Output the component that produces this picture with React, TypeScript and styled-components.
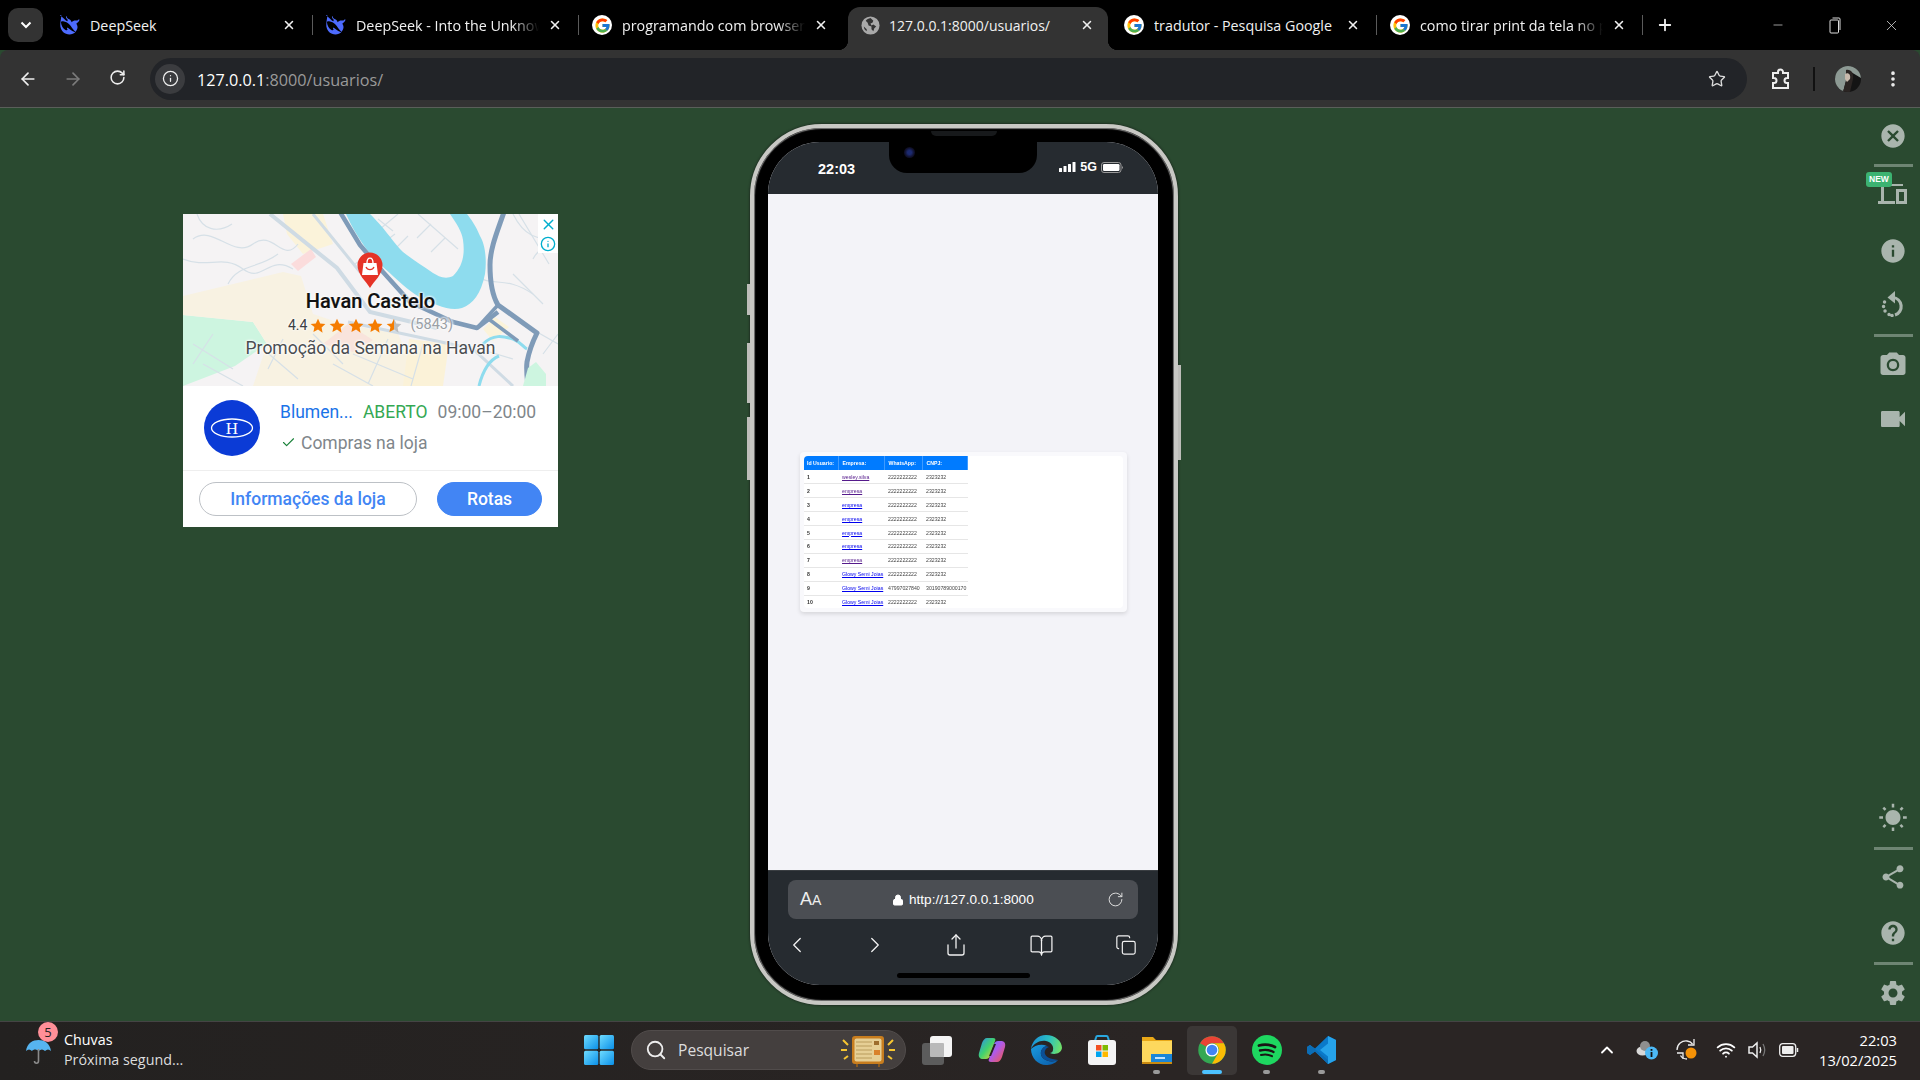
import React from "react";
import styled, { createGlobalStyle } from "styled-components";
import {
  ArrowLeft,
  ArrowRight,
  RotateCw,
  Star,
  Info,
  MoreVertical,
  Search,
  Plus,
  Minus,
  X,
  ChevronUp,
  ChevronLeft,
  ChevronRight,
  Share,
  BookOpen,
  Copy,
  Lock,
  Check,
  Wifi,
} from "lucide-react";
import { FcGoogle } from "react-icons/fc";
import {
  MdCancel,
  MdInfo,
  MdCameraAlt,
  MdVideocam,
  MdHelp,
  MdSettings,
  MdShare,
  MdWbSunny,
} from "react-icons/md";

const GlobalStyle = createGlobalStyle`
  html, body {
    margin: 0;
    padding: 0;
    width: 1920px;
    height: 1080px;
    overflow: hidden;
    background: #2a4a30;
    font-family: "Open Sans", "Liberation Sans", sans-serif;
  }
  * { box-sizing: border-box; }
`;

const Page = styled.div`
  width: 1920px;
  height: 1080px;
  display: flex;
  flex-direction: column;
`;

/* ---------- browser chrome ---------- */

const TabStrip = styled.div`
  height: 50px;
  background: #000;
  display: flex;
  align-items: flex-end;
  color: #fff;
`;

const TabSearch = styled.div`
  width: 35px;
  height: 34px;
  margin: 0 4px 8px 8px;
  border-radius: 10px;
  background: #333;
  display: flex;
  align-items: center;
  justify-content: center;
`;

const Tab = styled.div<{ $active?: boolean; $divider?: boolean }>`
  position: relative;
  width: 266px;
  height: ${({ $active }) => ($active ? "43px" : "50px")};
  margin: 0;
  padding: ${({ $active }) => ($active ? "0 11px 7px 12px" : "0 14px 0 13px")};
  display: flex;
  align-items: center;
  background: ${({ $active }) => ($active ? "#333" : "transparent")};
  border-radius: ${({ $active }) => ($active ? "12px 12px 0 0" : "0")};
  ${({ $active }) =>
    $active
      ? `
    width: 260px;
    margin: 0 3px;
    &::before, &::after {
      content: "";
      position: absolute;
      bottom: 0;
      width: 10px;
      height: 10px;
    }
    &::before { left: -10px; background: radial-gradient(circle at 0 0, #000 10px, #333 10.5px); }
    &::after { right: -10px; background: radial-gradient(circle at 100% 0, #000 10px, #333 10.5px); }
  `
      : ""}
  ${({ $divider }) =>
    $divider
      ? `
    &::after {
      content: "";
      position: absolute;
      right: 0;
      top: 15px;
      width: 1px;
      height: 20px;
      background: #5b5b5b;
    }
  `
      : ""}
`;

const TabTitle = styled.span<{ $fade?: boolean }>`
  flex: 1;
  margin-left: 10px;
  font-size: 14.3px;
  white-space: nowrap;
  overflow: hidden;
  color: #f1f1f1;
  ${({ $fade }) =>
    $fade
      ? `
    -webkit-mask-image: linear-gradient(90deg, #000 85%, transparent 100%);
    mask-image: linear-gradient(90deg, #000 85%, transparent 100%);
  `
      : ""}
`;

const ActiveTabTitle = styled(TabTitle)`
  font-size: 14px;
  margin-left: 9px;
`;

const Favicon = styled.span`
  width: 20px;
  height: 20px;
  flex: none;
  border-radius: 50%;
  display: flex;
  align-items: center;
  justify-content: center;
`;

const GoogleFavicon = styled(Favicon)`
  background: #fff;
`;

const TabClose = styled.span`
  width: 20px;
  margin-left: 6px;
  flex: none;
  display: flex;
  justify-content: center;
`;

const NewTab = styled.div`
  width: 44px;
  height: 50px;
  display: flex;
  align-items: center;
  justify-content: center;
`;

const WindowControls = styled.div`
  margin-left: auto;
  height: 50px;
  display: flex;
  align-items: center;
  color: #ddd;
`;

const WindowButton = styled.span`
  width: 57px;
  display: flex;
  justify-content: center;
`;

const Toolbar = styled.div`
  height: 58px;
  background: #333;
  border-top-left-radius: 8px;
  border-top-right-radius: 8px;
  display: flex;
  align-items: center;
  color: #e8e8e8;
  border-bottom: 1px solid #5a5f5a;
`;

const NavButton = styled.span<{ $dim?: boolean }>`
  width: 45px;
  display: flex;
  justify-content: center;
  color: ${({ $dim }) => ($dim ? "#7c7c7c" : "#eee")};
`;

const NavGroup = styled.div`
  width: 150px;
  padding-left: 5px;
  display: flex;
  flex: none;
`;

const Omnibox = styled.div`
  width: 1597px;
  height: 42px;
  border-radius: 21px;
  background: #222428;
  padding: 0 21px 0 5px;
  display: flex;
  align-items: center;
`;

const SiteInfo = styled.span`
  width: 30px;
  height: 30px;
  border-radius: 50%;
  background: #3b3c3f;
  display: flex;
  align-items: center;
  justify-content: center;
`;

const UrlText = styled.span`
  margin-left: 12px;
  padding-top: 2px;
  font-size: 16.2px;
  color: #fff;
`;

const UrlDim = styled.span`
  color: #9a9a9a;
`;

const ToolbarEnd = styled.div`
  flex: 1;
  display: flex;
  align-items: center;
  padding-left: 23px;
`;

const VDivider = styled.span`
  width: 1.5px;
  height: 24px;
  background: #111;
  margin: 0 20px 0 22px;
`;

const Avatar = styled.span`
  width: 26px;
  height: 26px;
  border-radius: 50%;
  overflow: hidden;
  display: block;
  margin-right: 22px;
`;

/* ---------- page area ---------- */

const Viewport = styled.main`
  flex: 1;
  min-height: 0;
  display: flex;
  align-items: flex-start;
  background: #2a4a30;
`;

const Ad = styled.aside`
  width: 375px;
  height: 313px;
  margin: 106px 0 0 183px;
  background: #fff;
  display: flex;
  flex-direction: column;
  flex: none;
`;

const MapArea = styled.div`
  position: relative;
  height: 172px;
  overflow: hidden;
  background: #f5f3f4;
`;

const MapSvg = styled.svg`
  display: block;
`;

const AdBadges = styled.div`
  position: absolute;
  top: 0;
  right: 0;
  width: 20px;
  height: 39px;
  background: #fff;
  display: flex;
  flex-direction: column;
  align-items: center;
  color: #00aecd;
  padding-top: 2px;
  gap: 3px;
`;

const MapLabel = styled.div`
  position: absolute;
  left: 0;
  right: 0;
  top: 74px;
  display: flex;
  flex-direction: column;
  align-items: center;
  font-family: Roboto, sans-serif;
  text-shadow: 0 0 3px #fff, 0 0 3px #fff, 0 0 2px #fff;
`;

const StoreName = styled.div`
  font-size: 20px;
  font-weight: 500;
  line-height: 26px;
  color: #111;
  -webkit-text-stroke: 0.2px #111;
`;

const Rating = styled.div`
  display: flex;
  align-items: center;
  font-size: 14px;
  line-height: 20px;
  margin-top: 1px;
  color: #3c4043;
  gap: 3px;
`;

const RatingCount = styled.span`
  color: #9aa0a6;
  margin-left: 5px;
  font-size: 14.5px;
`;

const Promo = styled.div`
  font-size: 17.5px;
  line-height: 24px;
  margin-top: 1px;
  color: #4a4d50;
`;

const StoreRow = styled.div`
  height: 85px;
  padding: 0 0 0 21px;
  display: flex;
  align-items: center;
  gap: 20px;
  border-bottom: 1px solid #eee;
  font-family: Roboto, sans-serif;
`;

const Logo = styled.div`
  width: 56px;
  height: 56px;
  border-radius: 50%;
  background: #0b3bd6;
  display: flex;
  align-items: center;
  justify-content: center;
  flex: none;
`;

const StoreLines = styled.div`
  display: flex;
  flex-direction: column;
  gap: 11px;
  margin-top: -2px;
`;

const StoreLine = styled.div`
  display: flex;
  align-items: center;
  font-size: 17.5px;
  line-height: 20px;
  color: #80868b;
`;

const City = styled.span`
  color: #1a73e8;
  margin-right: 10px;
`;

const OpenNow = styled.span`
  color: #34a853;
  margin-right: 10px;
`;

const CheckMark = styled.span`
  color: #188038;
  display: flex;
  margin: 0 5px 0 1px;
`;

const AdActions = styled.div`
  flex: 1;
  display: flex;
  align-items: flex-start;
  padding: 11px 16px 0;
  gap: 20px;
  font-family: Roboto, sans-serif;
`;

const PillButton = styled.div<{ $primary?: boolean }>`
  height: 34px;
  width: ${({ $primary }) => ($primary ? "105px" : "218px")};
  border-radius: 17px;
  border: 1px solid ${({ $primary }) => ($primary ? "#4285f4" : "#bdc1c6")};
  background: ${({ $primary }) => ($primary ? "#4285f4" : "#fff")};
  color: ${({ $primary }) => ($primary ? "#fff" : "#4285f4")};
  font-size: 17.5px;
  font-weight: 500;
  display: flex;
  align-items: center;
  justify-content: center;
`;

/* ---------- phone ---------- */

const Phone = styled.div`
  position: relative;
  width: 428px;
  height: 881px;
  margin: 16px 0 0 192px;
  flex: none;
  padding: 14px 16px 16px 14px;
  border: 4px solid #c8c8c4;
  border-radius: 72px;
  background: #000;
  box-shadow: 0 0 2px 1px rgba(20, 20, 20, 0.45), inset 0 0 1px 1px #777;
`;

const SideButton = styled.span<{ $side: "left" | "right"; $top: number; $h: number }>`
  position: absolute;
  ${({ $side }) => ($side === "left" ? "left: -7px;" : "right: -7px;")}
  top: ${({ $top }) => $top}px;
  width: 3px;
  height: ${({ $h }) => $h}px;
  background: #bdbdb9;
`;

const Speaker = styled.span`
  position: absolute;
  top: 3px;
  left: 177px;
  width: 66px;
  height: 5px;
  border-radius: 0 0 6px 6px;
  background: #17191b;
  z-index: 2;
`;

const Screen = styled.div`
  position: relative;
  height: 100%;
  border-radius: 52px;
  overflow: hidden;
  display: flex;
  flex-direction: column;
  background: #f3f3f8;
`;

const Notch = styled.div`
  position: absolute;
  top: 0;
  left: 121px;
  width: 148px;
  height: 31px;
  background: #000;
  border-radius: 0 0 18px 18px;
`;

const Camera = styled.span`
  position: absolute;
  left: 15px;
  top: 5px;
  width: 11px;
  height: 11px;
  border-radius: 50%;
  background: radial-gradient(circle, #1c2a70 0 25%, #10102a 60%, #08080f 100%);
`;

const StatusBar = styled.div`
  height: 52px;
  background: #262b30;
  padding: 18px 35px 0 50px;
  display: flex;
  align-items: flex-start;
  justify-content: space-between;
  color: #fff;
  font-family: "Liberation Sans", sans-serif;
  font-weight: 700;
  flex: none;
`;

const Clock = styled.span`
  font-size: 14.5px;
  line-height: 18px;
`;

const StatusIcons = styled.span`
  display: flex;
  align-items: center;
  gap: 4px;
  font-size: 12.5px;
  line-height: 14px;
`;

const WebView = styled.div`
  flex: 1;
  display: flex;
  align-items: center;
  justify-content: center;
  background: #f3f3f8;
`;

const DataCard = styled.div`
  width: 327px;
  height: 160px;
  padding: 4px;
  background: #f9f9fc;
  border-radius: 4px;
  box-shadow: 0 2px 4px rgba(0, 0, 0, 0.12);
`;

const DataCardInner = styled.div`
  height: 100%;
  background: #fff;
  border-radius: 4px;
  overflow: hidden;
`;

const Table = styled.table`
  border-collapse: collapse;
  width: 164px;
  table-layout: fixed;
  font-family: "Liberation Sans", sans-serif;
  font-size: 5.2px;
  filter: blur(0.2px);
`;

const Th = styled.th`
  height: 14px;
  padding: 0 0 0 3.5px;
  background: #007bff;
  color: #fff;
  text-align: left;
  font-weight: 700;
  white-space: nowrap;
  border-right: 1px solid #3f9bff;
`;

const Td = styled.td`
  height: 13.9px;
  padding: 0 0 0 3.5px;
  color: #444;
  white-space: nowrap;
  border-bottom: 1px solid #e6e6e6;
`;

const IdCell = styled(Td)`
  font-weight: 700;
  color: #333;
`;

const RowLink = styled.a<{ $visited?: boolean }>`
  color: ${({ $visited }) => ($visited ? "#551a8b" : "#0000ee")};
  text-decoration: underline;
`;

const SafariBar = styled.div`
  height: 115px;
  flex: none;
  background: #262b30;
  border-top: 1px solid #3a3e42;
  display: flex;
  flex-direction: column;
  align-items: center;
  padding-top: 9px;
  color: #f2f2f2;
`;

const AddressField = styled.div`
  width: 350px;
  height: 39px;
  border-radius: 8px;
  background: #4b4e53;
  display: flex;
  align-items: center;
  padding: 0 14px 0 12px;
  font-family: "Liberation Sans", sans-serif;
`;

const ReaderMark = styled.span`
  font-size: 18px;
  width: 92px;
  color: #eee;
`;

const ReaderSmall = styled.span`
  font-size: 14px;
`;

const AddressText = styled.span`
  font-size: 13.6px;
  display: flex;
  align-items: center;
  gap: 5px;
  color: #fff;
`;

const EndSlot = styled.span`
  margin-left: auto;
  display: flex;
  color: #ddd;
`;

const SafariIcons = styled.div`
  width: 350px;
  height: 26px;
  margin-top: 13px;
  display: grid;
  grid-template-columns: 18px 138px 24px 146px 24px;
  justify-items: center;
  align-items: center;
`;

const SafariIconCell = styled.span`
  display: flex;
  justify-content: center;
  width: 26px;
`;

const HomeBar = styled.span`
  width: 133px;
  height: 5px;
  border-radius: 3px;
  background: #000;
  margin-top: 15px;
`;

/* ---------- right tool column ---------- */

const SideTools = styled.div`
  margin-left: auto;
  width: 54px;
  height: 100%;
  display: flex;
  flex-direction: column;
  justify-content: space-between;
  color: #a9b5ad;
  flex: none;
`;

const ToolGroup = styled.div`
  display: flex;
  flex-direction: column;
  align-items: center;
`;

const ToolSlot = styled.span<{ $h: number }>`
  position: relative;
  height: ${({ $h }) => $h}px;
  display: flex;
  align-items: center;
  justify-content: center;
`;

const ToolDivider = styled.span<{ $top?: number; $bottom?: number }>`
  width: 39px;
  height: 3px;
  background: #6e8573;
  margin: ${({ $top }) => $top ?? 0}px 0 ${({ $bottom }) => $bottom ?? 0}px;
`;

const NewBadge = styled.span`
  position: absolute;
  top: 5px;
  left: -12px;
  padding: 0 3px;
  height: 15px;
  background: #3cb371;
  border-radius: 3px;
  color: #fff;
  font-family: "Liberation Sans", sans-serif;
  font-size: 8.5px;
  font-weight: 700;
  line-height: 15px;
`;

/* ---------- taskbar ---------- */

const Taskbar = styled.footer`
  height: 59px;
  flex: none;
  display: flex;
  align-items: center;
  padding-bottom: 2px;
  background: linear-gradient(90deg, #232120, #2a2524 60%, #2a2524);
  border-top: 1px solid #444;
  color: #fff;
`;

const Weather = styled.div`
  width: 571px;
  flex: none;
  padding-left: 25px;
  display: flex;
  align-items: center;
  position: relative;
`;

const WeatherBadge = styled.span`
  position: absolute;
  left: 38px;
  top: -8px;
  width: 20px;
  height: 20px;
  border-radius: 50%;
  background: #ff8f98;
  color: #222;
  font-size: 13px;
  line-height: 20px;
  text-align: center;
`;

const WeatherText = styled.div`
  margin-left: 12px;
  font-size: 14.3px;
  line-height: 20px;
`;

const WeatherSub = styled.div`
  color: #ddd;
`;

const TaskIcon = styled.span<{ $active?: boolean; $running?: boolean }>`
  position: relative;
  width: 55px;
  height: 49px;
  flex: none;
  display: flex;
  align-items: center;
  justify-content: center;
  ${({ $active }) =>
    $active
      ? `
    width: 50px;
    margin: 0 2.5px;
    border-radius: 5px;
    background: #3b3736;
    &::after {
      content: "";
      position: absolute;
      left: 15px;
      bottom: 1px;
      width: 20px;
      height: 4px;
      border-radius: 2px;
      background: #4cc2ff;
    }
  `
      : ""}
  ${({ $running }) =>
    $running
      ? `
    &::after {
      content: "";
      position: absolute;
      left: 24px;
      bottom: 1px;
      width: 7px;
      height: 4px;
      border-radius: 2px;
      background: #9a9a9a;
    }
  `
      : ""}
`;

const SearchPill = styled.div`
  width: 275px;
  height: 40px;
  margin: 0 3px 0 5px;
  border-radius: 20px;
  background: #443f3e;
  border: 1px solid #514c4b;
  display: flex;
  align-items: center;
  padding: 0 9px 0 13px;
  flex: none;
`;

const SearchText = styled.span`
  margin-left: 11px;
  font-size: 15.6px;
  color: #ddd;
`;

const SearchArt = styled.span`
  margin-left: auto;
  display: flex;
`;

const Tray = styled.div`
  margin-left: auto;
  padding-right: 23px;
  display: flex;
  align-items: center;
`;

const TrayIcon = styled.span<{ $w: number }>`
  width: ${({ $w }) => $w}px;
  display: flex;
  justify-content: center;
`;

const DateTime = styled.div`
  margin-left: 12px;
  text-align: right;
  font-size: 14.7px;
  line-height: 20px;
`;

/* ---------- drawings ---------- */

const DeepSeekIcon = () => (
  <svg width="20" height="20" viewBox="0 0 24 24">
    <path
      fill="#4d6bfe"
      d="M23 5c-.3-.1-.4.1-.6.3-1 1.100-2.200 1.500-3.500 1.400-2-.1-3.600.5-5 2-.3-1.800-1.300-2.900-2.900-3.600-.8-.4-1.700-.7-2.300-1.500-.4-.5-.5-1.200-.7-1.800-.1-.2-.2-.4-.4-.3-.3 0-.4.200-.4.400 0 1.600.6 2.900 2 3.800.200.100.200.200.1.400-.1.400-.2.700-.4 1.100-.1.200-.2.300-.4.200-1-.4-1.900-1.100-2.700-1.900-1.300-1.300-2.500-2.700-4-3.800-.4-.3-.7-.5-1.100-.7-1.500-1.500.200-2.700.600-2.800-.1 0 .3 3 .3 3C.7 8 0 11 .5 14c.6 4 3 7 6.700 8.600 4 1.500 8.800.8 11.500-2.500 1.200-1.400 2-3 2.300-5 .1-1.500-.3-3.500-1.500-4.700.8-.5 2.500-1.600 3.500-3.400.2-.5.400-1.700 0-2zM13 18c-2.500-2-3.700-2.600-4.200-2.600-.5 0-.4.600-.3 1 .1.400.3.700.5 1 .1.200.2.500-.2.700-.8.500-2.200-.2-2.300-.2-1.600-1-3-2.200-3.900-4-.9-1.700-1.400-3.500-1.500-5.400 0-.5.100-.7.600-.8.700-.1 1.400-.2 2.100-.1 2.900.4 5.400 1.700 7.500 3.800 1.200 1.200 2.100 2.600 3 4 1 1.500 2.100 2.900 3.500 4 .5.400.900.700 1.300.900-1.200.1-3 .2-6.100-2.300z"
    />
  </svg>
);

const GlobeIcon = () => (
  <svg width="19" height="19" viewBox="0 0 20 20">
    <circle cx="10" cy="10" r="9.500" fill="#a9a9a9" />
    <path
      fill="#333"
      d="M10 2c-2 .5-4 1.500-5 3l2 2 1 3 3 1v3l2 2 1-3 2-2-3-2-2 1-1-2 2-1 1-2-3-3zM4 12l-1-1c0 2 1 4 3 5v-2z"
    />
  </svg>
);

const GoogleG = () => (
  <GoogleFavicon>
    <FcGoogle size={17} />
  </GoogleFavicon>
);

const CloseGlyph = () => <X size={14} strokeWidth={2.6} color="#f0f0f0" />;

const RestoreGlyph = () => (
  <svg width="12" height="17" viewBox="0 0 12 17" fill="none" stroke="#ddd" strokeWidth="1">
    <rect x="1" y="3" width="8.500" height="13" rx="1" />
    <path d="M3.500 1H10a1 1 0 0 1 1 1v11" />
  </svg>
);

const ExtensionGlyph = () => (
  <svg width="21" height="23" viewBox="0 0 21 23" fill="none" stroke="#eee" strokeWidth="2">
    <path d="M8 5a2.500 2.500 0 0 1 5 0v1h5v5h-1a2.500 2.500 0 0 0 0 5h1v5H3v-5h1a2.500 2.500 0 0 0 0-5H3V6h5z" />
  </svg>
);

const AvatarArt = () => (
  <svg width="26" height="26" viewBox="0 0 26 26">
    <rect width="26" height="26" fill="#141414" />
    <path d="M0 0h26v12L16 6 12 12 8 26H0z" fill="#8d9a94" />
    <path d="M11 4c5-1 8 3 7 9l-3 13H8l3-12z" fill="#2b2523" />
    <path d="M10 8c3-2 6 0 5 5l-3 3-2-3z" fill="#c8b9ac" />
  </svg>
);

const MapDrawing = () => (
  <MapSvg width="375" height="172" viewBox="0 0 375 172" fill="none">
    <path d="M0 101L70 108 84 130 52 152 0 172z" fill="#cdf5e0" />
    <path d="M0 82L100 58 118 62 130 100 160 110 215 120 240 172H70L84 130 70 108 0 101z" fill="#f8f2e2" />
    <path d="M226 125l40 5-6 42h-40z" fill="#fbf2d8" />
    <path d="M100 0h40l10 30-30 10-16-20z" fill="#fbf3da" />
    <path d="M165 110l-25 20 30 8 20-12z" fill="#f9e4dc" />
    <path d="M108 50l20-15 5 8-18 14z" fill="#fbdcdc" />
    <path d="M300 115l12-12 14 10-16 14z" fill="#fbf3da" />
    <g stroke="#d6e0e7" strokeWidth="1.200">
      <path d="M10 25C30 10 50 45 70 30s30 20 45 0M0 45c25 10 40-5 60 10s25-15 50 0M45 70c10-20 30-15 50-30M14 0c5 15 20 20 35 10M290 60c20 15 30 0 60 20M350 45c5-10 15-15 25-10M330 0c10 20 25 30 45 20" />
      <path d="M172 50l40-30M195 5l15 12M215 0l-30 25M235 0l40 35M225 22l-12 12M248 10l-14 14M262 24l-14 14M336 0l30 50M330 60l30 30" />
      <path d="M10 130l40 25M30 120l-20 30M20 150l40 22M80 135l35 30M100 125l-15 30M170 140l60 25M205 125l-20 45M240 130l-12 42M280 130l50 15M340 110l35 20M360 140l15-20M130 120l30 30M150 150l40 22" />
    </g>
    <g stroke="#cfdbe4" strokeWidth="4">
      <path d="M87 0l67 54 33 44 67 16" />
      <path d="M130 0l47 58M165 108l70 15 55 12 40 37" strokeWidth="3" />
    </g>
    <path
      d="M163 0C172 20 185 40 200 53 208 60 214 66 220 71 230 80 242 87 254 91 264 95 272 96 279 94 290 90 298 80 302 60 304 45 302 30 297 22 293 12 288 5 284 0H267C274 10 279 18 280 26 282 40 280 52 270 62 262 66 255 62 250 59 240 52 230 46 220 38 212 30 205 20 200 14 195 8 190 3 187 0Z"
      fill="#8edcee"
    />
    <path d="M300 130c10-10 20-8 30-5 8 3 10 8 14 10M296 172c4-16 10-26 20-30" stroke="#8edcee" strokeWidth="3" />
    <g stroke="#7f9bb8" strokeLinejoin="round">
      <path d="M157-2l20 33 23 27 27 30 43 20 24 6 21-16" strokeWidth="4.500" />
      <path d="M321-2c-6 18-14 36-14 53 0 16 2 30 8 40l39 28c-5 10-8 18-10 29-1 8 0 15 1 24" strokeWidth="5" />
      <path d="M303 103l32 24M315 91l-21 23" strokeWidth="3.500" />
    </g>
    <path d="M340 172l5-18 8-6 10 12v12z" fill="#cdf5e0" />
    <path d="M187 74c-4-7-12.500-13-12.500-23a12.500 12.500 0 0 1 25 0c0 10-8.500 16-12.500 23z" fill="#e53327" />
    <path d="M180.500 49h13l1.500 12h-16z" fill="#fff" />
    <path d="M184 49c0-6.500 6-6.500 6 0" stroke="#fff" strokeWidth="1.400" />
    <path d="M183 53c1.500 3.500 6.500 3.500 8 0" stroke="#e53327" strokeWidth="1.300" />
  </MapSvg>
);

const RatingStar = ({ half }: { half?: boolean }) => (
  <svg width="16" height="15" viewBox="0 0 24 23">
    <defs>
      <linearGradient id="halfStar">
        <stop offset="50%" stopColor="#f57c00" />
        <stop offset="50%" stopColor="#bdbdbd" />
      </linearGradient>
    </defs>
    <path
      d="M12 1l3.400 7.300 7.900 1-5.800 5.400 1.500 7.800L12 17.700l-7 3.800 1.500-7.800L.7 9.300l7.900-1z"
      fill={half ? "url(#halfStar)" : "#f57c00"}
    />
  </svg>
);

const HavanLogo = () => (
  <svg width="44" height="24" viewBox="0 0 44 24" fill="none">
    <ellipse cx="22" cy="12" rx="20.500" ry="9" stroke="#fff" strokeWidth="1.300" />
    <text x="22" y="18" textAnchor="middle" fontFamily="Liberation Serif" fontSize="17" fill="#fff">
      H
    </text>
  </svg>
);

const SignalBars = () => (
  <svg width="17" height="10" viewBox="0 0 17 10" fill="#fff">
    <rect x="0" y="6" width="3" height="4" rx=".5" />
    <rect x="4.500" y="4" width="3" height="6" rx=".5" />
    <rect x="9" y="2" width="3" height="8" rx=".5" />
    <rect x="13.500" y="0" width="3" height="10" rx=".5" />
  </svg>
);

const BatteryGlyph = () => (
  <svg width="22" height="11" viewBox="0 0 22 11">
    <rect x=".5" y=".5" width="19.500" height="10" rx="2.500" fill="none" stroke="#9a9a9a" />
    <rect x="2" y="2" width="16.500" height="7" rx="1.200" fill="#fff" />
    <path d="M21 4v3c.6-.3 1-.9 1-1.500S21.600 4.300 21 4z" fill="#9a9a9a" />
  </svg>
);

const DevicesGlyph = () => (
  <svg width="30" height="22" viewBox="0 0 30 22" fill="#a9b5ad">
    <rect x="7" y="0" width="18" height="2" />
    <rect x="3" y="2" width="3" height="15" />
    <rect x="0" y="17" width="17" height="3" />
    <path d="M18 5h11v15H18zM21 8v9h5V8z" fillRule="evenodd" />
  </svg>
);

const RotateGlyph = () => (
  <svg width="24" height="26" viewBox="0 0 24 26" fill="none" stroke="#a9b5ad" strokeWidth="3.200">
    <path d="M12 6.500a9 9 0 0 1 2 17.500" />
    <path d="M2.500 15.500h.1M3.500 11h.1M4 20h.1M8 23.500h.1M11 24.500h.1" strokeWidth="3.400" strokeLinecap="round" />
    <path d="M14 0L6.500 6.500l7.500 6z" fill="#a9b5ad" stroke="none" />
  </svg>
);

const UmbrellaIcon = () => (
  <svg width="27" height="30" viewBox="0 0 27 30" fill="none">
    <path d="M1 16C2 8 8 5 13.500 5S25 8 26 16c-2-2-4-2-6 0-2-2-4-2-6.500 0-2-2-5-2-6.500 0-2-2-4-2-6 0z" fill="#56b4f0" />
    <path d="M13.500 14v12c0 3-4 3-4 0" stroke="#8a8a8a" strokeWidth="1.600" />
  </svg>
);

const WindowsLogo = () => (
  <svg width="30" height="30" viewBox="0 0 30 30">
    <defs>
      <linearGradient id="winTile" x1="0" y1="0" x2="1" y2="1">
        <stop offset="0" stopColor="#6fdcff" />
        <stop offset="1" stopColor="#0a8fe8" />
      </linearGradient>
    </defs>
    <rect x="0" y="0" width="14.300" height="14.300" rx="1.500" fill="url(#winTile)" />
    <rect x="15.700" y="0" width="14.300" height="14.300" rx="1.500" fill="url(#winTile)" />
    <rect x="0" y="15.700" width="14.300" height="14.300" rx="1.500" fill="url(#winTile)" />
    <rect x="15.700" y="15.700" width="14.300" height="14.300" rx="1.500" fill="url(#winTile)" />
  </svg>
);

const RadioArt = () => (
  <svg width="56" height="36" viewBox="0 0 56 36">
    <path d="M3 8l5 5M53 8l-5 5M1 18h6M55 18h-6M4 27l4-3M52 27l-4-3" stroke="#f7c531" strokeWidth="2" />
    <rect x="12" y="4" width="32" height="28" rx="3" fill="#c87d1e" />
    <rect x="14.500" y="6.500" width="27" height="23" rx="2" fill="#e6cf95" />
    <path d="M16 10h16M16 14h16M16 18h16M16 22h16M16 26h16" stroke="#b99c5c" />
    <rect x="34" y="9" width="5" height="4" fill="#9d6d2c" />
    <rect x="34" y="18" width="6" height="5" fill="#d9822b" />
    <path d="M17 32v3M39 32v3" stroke="#8a5a1e" strokeWidth="2" />
  </svg>
);

const TaskViewIcon = () => (
  <svg width="30" height="29" viewBox="0 0 30 29">
    <rect x="0" y="7" width="22" height="22" rx="3" fill="#5c5c5c" />
    <rect x="8" y="0" width="22" height="21" rx="3" fill="#f4f4f4" />
    <rect x="8" y="7" width="14" height="14" rx="1" fill="#b9b9b9" />
  </svg>
);

const CopilotIcon = () => (
  <svg width="28" height="26" viewBox="0 0 28 26" fill="none">
    <defs>
      <linearGradient id="copA" x1="0" y1="0" x2="1" y2="1">
        <stop offset="0" stopColor="#2b8cf5" />
        <stop offset=".5" stopColor="#41d26e" />
        <stop offset="1" stopColor="#f6d32d" />
      </linearGradient>
      <linearGradient id="copB" x1="0" y1="0" x2="1" y2="1">
        <stop offset="0" stopColor="#5a7cf5" />
        <stop offset=".45" stopColor="#b05ae8" />
        <stop offset="1" stopColor="#f9583a" />
      </linearGradient>
    </defs>
    <path d="M9 1h6c2 0 3 1 2 3l-5 15c-1 2-2 3-4 3H5c-3 0-5-2-4-6l3-10C5 3 7 1 9 1z" fill="url(#copA)" />
    <path d="M19 25h-6c-2 0-3-1-2-3l5-15c1-2 2-3 4-3h3c3 0 5 2 4 6l-3 10c-1 3-3 5-5 5z" fill="url(#copB)" />
    <path d="M16 7l-5 12h2l5-12z" fill="#2a2020" />
  </svg>
);

const EdgeIcon = () => (
  <svg width="31" height="30" viewBox="0 0 31 30">
    <defs>
      <linearGradient id="edgeA" x1="0" y1=".3" x2="1" y2=".5">
        <stop offset="0" stopColor="#1b8fd8" />
        <stop offset=".55" stopColor="#2bbfc0" />
        <stop offset="1" stopColor="#6fe06a" />
      </linearGradient>
      <linearGradient id="edgeB" x1="0" y1="0" x2="1" y2="1">
        <stop offset="0" stopColor="#1a9ce0" />
        <stop offset="1" stopColor="#0a5aa8" />
      </linearGradient>
    </defs>
    <path d="M15 0C7 0 1 6 0 14c3-6 9-9 15-8 5 1 8 5 7 9 0 2-2 3-3 3 4 2 11 1 12-5C31 6 24 0 15 0z" fill="url(#edgeA)" />
    <path d="M0 14c0 9 7 16 15 16 4 0 9-1 12-5-4 2-10 2-14-1-4-3-4-8-1-11 1-1 2-2 4-2-6-3-13 0-16 3z" fill="url(#edgeB)" />
    <path d="M13 24c-4-3-4-8-1-11 2-2 4-2 6-1-3 1-5 4-4 7 1 3 5 5 13 6-4 2-10 2-14-1z" fill="#0b4f96" />
  </svg>
);

const StoreIcon = () => (
  <svg width="30" height="30" viewBox="0 0 30 30" fill="none">
    <path d="M8 6l1-3.500c.2-.8.7-1.500 1.500-1.500h9c.8 0 1.300.7 1.500 1.500L22 6" stroke="#29a8e0" strokeWidth="2" />
    <rect x="1" y="5" width="28" height="25" rx="3" fill="#f4f4f4" />
    <rect x="9" y="10" width="5.500" height="5.500" fill="#f25022" />
    <rect x="15.500" y="10" width="5.500" height="5.500" fill="#7fba00" />
    <rect x="9" y="16.500" width="5.500" height="5.500" fill="#00a4ef" />
    <rect x="15.500" y="16.500" width="5.500" height="5.500" fill="#ffb900" />
  </svg>
);

const ExplorerIcon = () => (
  <svg width="32" height="30" viewBox="0 0 32 30">
    <path d="M1 2h11l3 3h16v24H1z" fill="#e9a817" />
    <rect x="1" y="6" width="30" height="23" fill="#fdd85d" />
    <rect x="1" y="27" width="30" height="2" fill="#c98a10" />
    <rect x="10" y="19" width="21" height="8" fill="#1a86d9" />
    <rect x="14" y="22" width="10" height="2" fill="#bfe3ff" />
  </svg>
);

const ChromeIcon = () => (
  <svg width="30" height="30" viewBox="0 0 48 48">
    <circle cx="24" cy="24" r="22" fill="#34a853" />
    <path d="M5 13a22 22 0 0 1 38.050 0H24a11 11 0 0 0-9.530 5.500z" fill="#ea4335" />
    <path d="M43.050 13A22 22 0 0 1 24 46l9.530-16.500A11 11 0 0 0 24 13z" fill="#fbbc05" />
    <circle cx="24" cy="24" r="10.500" fill="#fff" />
    <circle cx="24" cy="24" r="8.500" fill="#4285f4" />
  </svg>
);

const SpotifyIcon = () => (
  <svg width="30" height="30" viewBox="0 0 30 30" fill="none">
    <circle cx="15" cy="15" r="15" fill="#1ed760" />
    <g stroke="#191414" strokeLinecap="round">
      <path d="M7 10.500c5-1.500 11-1 16 1.500" strokeWidth="2.800" />
      <path d="M8 15.500c5-1.200 10-.5 13.500 1.500" strokeWidth="2.400" />
      <path d="M9 20c4-1 8-.5 11 1.200" strokeWidth="2" />
    </g>
  </svg>
);

const VsCodeIcon = () => (
  <svg width="30" height="30" viewBox="0 0 30 30">
    <path d="M21 1l8 4v20l-8 4-13-12.500L3 20l-3-2v-6l3-2 5 3.500z" fill="#0a79c9" />
    <path d="M21 1l8 4v20l-8 4zM21 8.500L13 15l8 6.500z" fill="#26a3ea" fillRule="evenodd" />
    <path d="M0 12l3-2 18 15v4l-13-12.500L3 20l-3-2z" fill="#0c6db5" />
  </svg>
);

const CloudInfoIcon = () => (
  <svg width="22" height="20" viewBox="0 0 22 20">
    <ellipse cx="6.500" cy="11" rx="6" ry="4.500" fill="#d8d8d8" />
    <circle cx="9" cy="6" r="5" fill="#8f8f8f" />
    <circle cx="15.500" cy="13" r="6.500" fill="#4cb8f5" />
    <rect x="14.600" y="12" width="1.800" height="5" fill="#111" />
    <rect x="14.600" y="9" width="1.800" height="1.800" fill="#111" />
  </svg>
);

const SyncIcon = () => (
  <svg width="24" height="24" viewBox="0 0 24 24" fill="none">
    <path d="M2 12C2 6 7 2.500 12 3c2 .2 4 1 5.500 3" stroke="#eee" strokeWidth="1.300" />
    <path d="M19 1v6h-6" stroke="#eee" strokeWidth="1.300" />
    <path d="M12 21c-2.500 0-5-1-6.500-3.500" stroke="#eee" strokeWidth="1.300" />
    <path d="M2 15h6v6" stroke="#eee" strokeWidth="1.300" />
    <circle cx="16" cy="15" r="5.500" fill="#f59207" />
  </svg>
);

const VolumeGlyph = () => (
  <svg width="20" height="20" viewBox="0 0 20 20" fill="none">
    <path d="M1 7h3.500L9 3v14l-4.500-4H1z" stroke="#eee" strokeWidth="1.500" />
    <path d="M12 7c1 2 1 4 0 6" stroke="#eee" strokeWidth="1.300" />
    <path d="M15 4c2 3.500 2 8.500 0 12" stroke="#777" strokeWidth="1.300" />
  </svg>
);

const BatteryTray = () => (
  <svg width="20" height="14" viewBox="0 0 20 14" fill="none">
    <rect x=".7" y=".7" width="16" height="12.600" rx="3" stroke="#eee" strokeWidth="1.300" />
    <rect x="3" y="3" width="11.500" height="8" rx="1" fill="#eee" />
    <path d="M18.500 5v4" stroke="#eee" strokeWidth="1.500" />
  </svg>
);

type Row = { id: number; name: string; visited?: boolean; phone: string; cnpj: string };

const rows: Row[] = [
  { id: 1, name: "wesley.silva", visited: true, phone: "2222222222", cnpj: "2323232" },
  { id: 2, name: "empresa", visited: true, phone: "2222222222", cnpj: "2323232" },
  { id: 3, name: "empresa", phone: "2222222222", cnpj: "2323232" },
  { id: 4, name: "empresa", phone: "2222222222", cnpj: "2323232" },
  { id: 5, name: "empresa", phone: "2222222222", cnpj: "2323232" },
  { id: 6, name: "empresa", phone: "2222222222", cnpj: "2323232" },
  { id: 7, name: "empresa", visited: true, phone: "2222222222", cnpj: "2323232" },
  { id: 8, name: "Glowy Semi Joias", phone: "2222222222", cnpj: "2323232" },
  { id: 9, name: "Glowy Semi Joias", phone: "47997027840", cnpj: "30190789000170" },
  { id: 10, name: "Glowy Semi Joias", phone: "2222222222", cnpj: "2323232" },
];

const App = () => (
  <Page>
    <GlobalStyle />
    <TabStrip>
      <TabSearch>
        <svg width="12" height="8" viewBox="0 0 12 8" fill="none" stroke="#fff" strokeWidth="2">
          <path d="M1.500 1.500L6 6l4.500-4.500" />
        </svg>
      </TabSearch>
      <Tab $divider>
        <Favicon>
          <DeepSeekIcon />
        </Favicon>
        <TabTitle>DeepSeek</TabTitle>
        <TabClose>
          <CloseGlyph />
        </TabClose>
      </Tab>
      <Tab $divider>
        <Favicon>
          <DeepSeekIcon />
        </Favicon>
        <TabTitle $fade>DeepSeek - Into the Unknown</TabTitle>
        <TabClose>
          <CloseGlyph />
        </TabClose>
      </Tab>
      <Tab>
        <GoogleG />
        <TabTitle $fade>programando com browser</TabTitle>
        <TabClose>
          <CloseGlyph />
        </TabClose>
      </Tab>
      <Tab $active>
        <Favicon>
          <GlobeIcon />
        </Favicon>
        <ActiveTabTitle>127.0.0.1:8000/usuarios/</ActiveTabTitle>
        <TabClose>
          <CloseGlyph />
        </TabClose>
      </Tab>
      <Tab $divider>
        <GoogleG />
        <TabTitle>tradutor - Pesquisa Google</TabTitle>
        <TabClose>
          <CloseGlyph />
        </TabClose>
      </Tab>
      <Tab $divider>
        <GoogleG />
        <TabTitle $fade>como tirar print da tela no pc</TabTitle>
        <TabClose>
          <CloseGlyph />
        </TabClose>
      </Tab>
      <NewTab>
        <Plus size={18} strokeWidth={2.4} color="#f0f0f0" />
      </NewTab>
      <WindowControls>
        <WindowButton>
          <Minus size={14} strokeWidth={1.2} />
        </WindowButton>
        <WindowButton>
          <RestoreGlyph />
        </WindowButton>
        <WindowButton>
          <X size={17} strokeWidth={1.1} />
        </WindowButton>
      </WindowControls>
    </TabStrip>

    <Toolbar>
      <NavGroup>
        <NavButton>
          <ArrowLeft size={20} strokeWidth={2} />
        </NavButton>
        <NavButton $dim>
          <ArrowRight size={20} strokeWidth={2} />
        </NavButton>
        <NavButton>
          <RotateCw size={17} strokeWidth={2.2} />
        </NavButton>
      </NavGroup>
      <Omnibox>
        <SiteInfo>
          <Info size={17} strokeWidth={1.8} color="#eee" />
        </SiteInfo>
        <UrlText>
          127.0.0.1<UrlDim>:8000/usuarios/</UrlDim>
        </UrlText>
        <EndSlot>
          <Star size={18} strokeWidth={1.8} color="#ddd" />
        </EndSlot>
      </Omnibox>
      <ToolbarEnd>
        <ExtensionGlyph />
        <VDivider />
        <Avatar>
          <AvatarArt />
        </Avatar>
        <MoreVertical size={20} strokeWidth={2.4} color="#eee" />
      </ToolbarEnd>
    </Toolbar>

    <Viewport>
      <Ad>
        <MapArea>
          <MapDrawing />
          <AdBadges>
            <X size={17} strokeWidth={2} />
            <Info size={16} strokeWidth={2} />
          </AdBadges>
          <MapLabel>
            <StoreName>Havan Castelo</StoreName>
            <Rating>
              4.4
              <RatingStar />
              <RatingStar />
              <RatingStar />
              <RatingStar />
              <RatingStar half />
              <RatingCount>(5843)</RatingCount>
            </Rating>
            <Promo>Promoção da Semana na Havan</Promo>
          </MapLabel>
        </MapArea>
        <StoreRow>
          <Logo>
            <HavanLogo />
          </Logo>
          <StoreLines>
            <StoreLine>
              <City>Blumen...</City>
              <OpenNow>ABERTO</OpenNow>
              09:00–20:00
            </StoreLine>
            <StoreLine>
              <CheckMark>
                <Check size={15} strokeWidth={1.8} />
              </CheckMark>
              Compras na loja
            </StoreLine>
          </StoreLines>
        </StoreRow>
        <AdActions>
          <PillButton>Informações da loja</PillButton>
          <PillButton $primary>Rotas</PillButton>
        </AdActions>
      </Ad>

      <Phone>
        <SideButton $side="left" $top={156} $h={31} />
        <SideButton $side="left" $top={215} $h={60} />
        <SideButton $side="left" $top={289} $h={63} />
        <SideButton $side="right" $top={237} $h={95} />
        <Speaker />
        <Screen>
          <StatusBar>
            <Clock>22:03</Clock>
            <StatusIcons>
              <SignalBars />
              5G
              <BatteryGlyph />
            </StatusIcons>
          </StatusBar>
          <Notch>
            <Camera />
          </Notch>
          <WebView>
            <DataCard>
              <DataCardInner>
                <Table>
                  <colgroup>
                    <col width="35" />
                    <col width="46" />
                    <col width="38" />
                    <col width="45" />
                  </colgroup>
                  <thead>
                    <tr>
                      <Th>Id Usuario:</Th>
                      <Th>Empresa:</Th>
                      <Th>WhatsApp:</Th>
                      <Th>CNPJ:</Th>
                    </tr>
                  </thead>
                  <tbody>
                    {rows.map((row) => (
                      <tr key={row.id}>
                        <IdCell>{row.id}</IdCell>
                        <Td>
                          <RowLink $visited={row.visited}>{row.name}</RowLink>
                        </Td>
                        <Td>{row.phone}</Td>
                        <Td>{row.cnpj}</Td>
                      </tr>
                    ))}
                  </tbody>
                </Table>
              </DataCardInner>
            </DataCard>
          </WebView>
          <SafariBar>
            <AddressField>
              <ReaderMark>
                A<ReaderSmall>A</ReaderSmall>
              </ReaderMark>
              <AddressText>
                <Lock size={12} fill="#fff" strokeWidth={2} />
                http://127.0.0.1:8000
              </AddressText>
              <EndSlot>
                <RotateCw size={17} strokeWidth={1.4} />
              </EndSlot>
            </AddressField>
            <SafariIcons>
              <SafariIconCell>
                <ChevronLeft size={26} strokeWidth={1.2} />
              </SafariIconCell>
              <SafariIconCell>
                <ChevronRight size={26} strokeWidth={1.2} />
              </SafariIconCell>
              <SafariIconCell>
                <Share size={24} strokeWidth={1.3} />
              </SafariIconCell>
              <SafariIconCell>
                <BookOpen size={25} strokeWidth={1.2} />
              </SafariIconCell>
              <SafariIconCell>
                <Copy size={22} strokeWidth={1.3} />
              </SafariIconCell>
            </SafariIcons>
            <HomeBar />
          </SafariBar>
        </Screen>
      </Phone>

      <SideTools>
        <ToolGroup>
          <ToolSlot $h={56}>
            <MdCancel size={28} />
          </ToolSlot>
          <ToolDivider />
          <ToolSlot $h={56}>
            <DevicesGlyph />
            <NewBadge>NEW</NewBadge>
          </ToolSlot>
          <ToolSlot $h={56}>
            <MdInfo size={28} />
          </ToolSlot>
          <ToolSlot $h={50}>
            <RotateGlyph />
          </ToolSlot>
          <ToolDivider $top={5} />
          <ToolSlot $h={56}>
            <MdCameraAlt size={30} />
          </ToolSlot>
          <ToolSlot $h={52}>
            <MdVideocam size={32} />
          </ToolSlot>
        </ToolGroup>
        <ToolGroup>
          <ToolSlot $h={58}>
            <MdWbSunny size={30} />
          </ToolSlot>
          <ToolDivider />
          <ToolSlot $h={54}>
            <MdShare size={28} />
          </ToolSlot>
          <ToolSlot $h={58}>
            <MdHelp size={28} />
          </ToolSlot>
          <ToolDivider />
          <ToolSlot $h={56}>
            <MdSettings size={30} />
          </ToolSlot>
        </ToolGroup>
      </SideTools>
    </Viewport>

    <Taskbar>
      <Weather>
        <UmbrellaIcon />
        <WeatherBadge>5</WeatherBadge>
        <WeatherText>
          Chuvas
          <WeatherSub>Próxima segund...</WeatherSub>
        </WeatherText>
      </Weather>
      <TaskIcon>
        <WindowsLogo />
      </TaskIcon>
      <SearchPill>
        <Search size={22} strokeWidth={2} color="#eee" />
        <SearchText>Pesquisar</SearchText>
        <SearchArt>
          <RadioArt />
        </SearchArt>
      </SearchPill>
      <TaskIcon>
        <TaskViewIcon />
      </TaskIcon>
      <TaskIcon>
        <CopilotIcon />
      </TaskIcon>
      <TaskIcon>
        <EdgeIcon />
      </TaskIcon>
      <TaskIcon>
        <StoreIcon />
      </TaskIcon>
      <TaskIcon $running>
        <ExplorerIcon />
      </TaskIcon>
      <TaskIcon $active>
        <ChromeIcon />
      </TaskIcon>
      <TaskIcon $running>
        <SpotifyIcon />
      </TaskIcon>
      <TaskIcon $running>
        <VsCodeIcon />
      </TaskIcon>
      <Tray>
        <TrayIcon $w={40}>
          <ChevronUp size={20} strokeWidth={2.2} />
        </TrayIcon>
        <TrayIcon $w={40}>
          <CloudInfoIcon />
        </TrayIcon>
        <TrayIcon $w={40}>
          <SyncIcon />
        </TrayIcon>
        <TrayIcon $w={38}>
          <Wifi size={20} strokeWidth={2.2} />
        </TrayIcon>
        <TrayIcon $w={26}>
          <VolumeGlyph />
        </TrayIcon>
        <TrayIcon $w={36}>
          <BatteryTray />
        </TrayIcon>
        <DateTime>
          22:03
          <br />
          13/02/2025
        </DateTime>
      </Tray>
    </Taskbar>
  </Page>
);

export default App;
